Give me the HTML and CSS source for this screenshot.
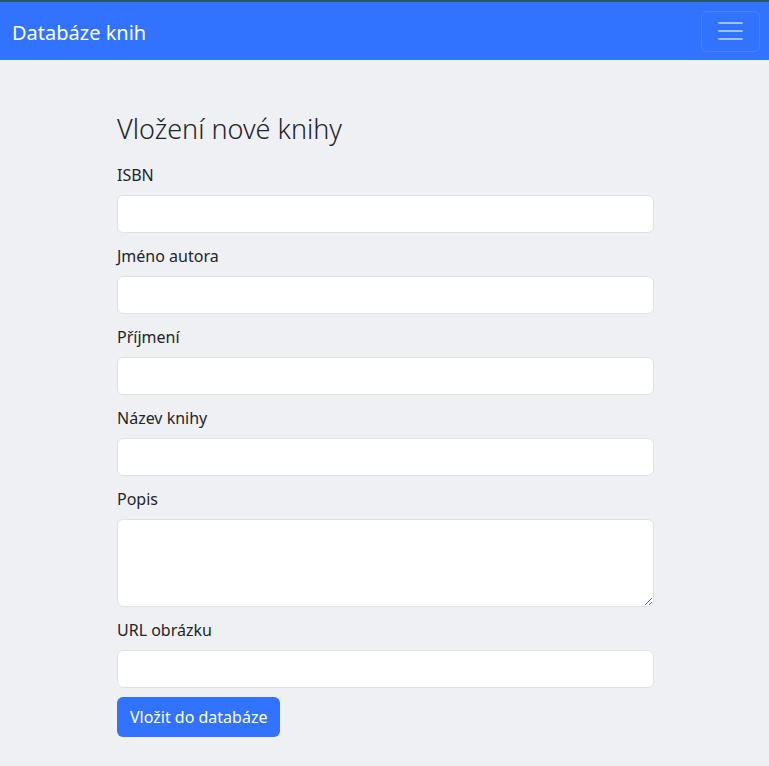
FILE: index.html
```html
<!DOCTYPE html>
<html lang="cs">
<head>
  <meta charset="UTF-8">
  <title>Databáze knih</title>
  <meta name="viewport" content="width=device-width, initial-scale=1.0">
  <link rel="stylesheet" href="styles.css">
</head>
<body>

  <nav class="navbar">
    <a class="brand" href="#">Databáze knih</a>
    <button class="toggler" type="button" aria-label="Menu">
      <span class="toggler-icon"></span>
    </button>
  </nav>

  <main class="content">
    <h2 class="title">Vložení nové knihy</h2>
    <form class="book-form">
      <div class="field">
        <label for="isbn">ISBN</label>
        <input type="text" id="isbn">
      </div>
      <div class="field">
        <label for="jmeno">Jméno autora</label>
        <input type="text" id="jmeno">
      </div>
      <div class="field">
        <label for="prijmeni">Příjmení</label>
        <input type="text" id="prijmeni">
      </div>
      <div class="field">
        <label for="nazev">Název knihy</label>
        <input type="text" id="nazev">
      </div>
      <div class="field">
        <label for="popis">Popis</label>
        <textarea id="popis" rows="3"></textarea>
      </div>
      <div class="field">
        <label for="url">URL obrázku</label>
        <input type="text" id="url">
      </div>
      <button class="submit" type="submit">Vložit do databáze</button>
    </form>
  </main>

</body>
</html>
```

FILE: styles.css
```css
:root {
  --primary: #3172fe;
  --bg-color: #eff0f4;
  --text-color: #212529;
  --border-color: #dee2e6;
}

body {
  margin: 0;
  background-color: var(--bg-color);
  color: var(--text-color);
  font-family: 'Noto Sans', 'Liberation Sans', sans-serif;
  font-size: 16px;
  line-height: 1.5;
}

.navbar {
  display: flex;
  align-items: center;
  justify-content: space-between;
  height: 58px;
  padding: 0 9px 0 12px;
  background-color: var(--primary);
  border-top: 2px solid #28566a;
}

.brand {
  padding-top: 3px;
  color: #fff;
  font-size: 20px;
  text-decoration: none;
}

.toggler {
  width: 59px;
  height: 41px;
  padding: 0;
  background: transparent;
  border: 1px solid rgba(255, 255, 255, 0.1);
  border-radius: 6px;
  display: flex;
  align-items: center;
  justify-content: center;
}

.toggler-icon {
  display: block;
  width: 25px;
  height: 2px;
  background: rgba(255, 255, 255, 0.55);
  box-shadow: 0 -8px 0 rgba(255, 255, 255, 0.55), 0 8px 0 rgba(255, 255, 255, 0.55);
  border-radius: 1px;
}

.content {
  width: 537px;
  margin-left: calc(50% - 267.5px);
  padding: 53px 0 29px;
}

.title {
  margin: 0 0 18px;
  font-size: 27px;
  font-weight: 300;
  line-height: 1.2;
}

.book-form {
  display: flex;
  flex-direction: column;
  gap: 11px;
}

.field {
  display: flex;
  flex-direction: column;
}

.field label {
  margin-bottom: 8px;
}

.field input,
.field textarea {
  box-sizing: border-box;
  width: 100%;
  padding: 6px 12px;
  font: inherit;
  color: var(--text-color);
  background: #fff;
  border: 1px solid var(--border-color);
  border-radius: 6px;
}

.field input {
  height: 38px;
}

.field textarea {
  height: 88px;
  resize: vertical;
}

.submit {
  align-self: flex-start;
  height: 40px;
  margin-top: -2px;
  padding: 0 13px;
  font: inherit;
  color: #fff;
  background-color: var(--primary);
  border: none;
  border-radius: 6px;
  cursor: pointer;
}
```
